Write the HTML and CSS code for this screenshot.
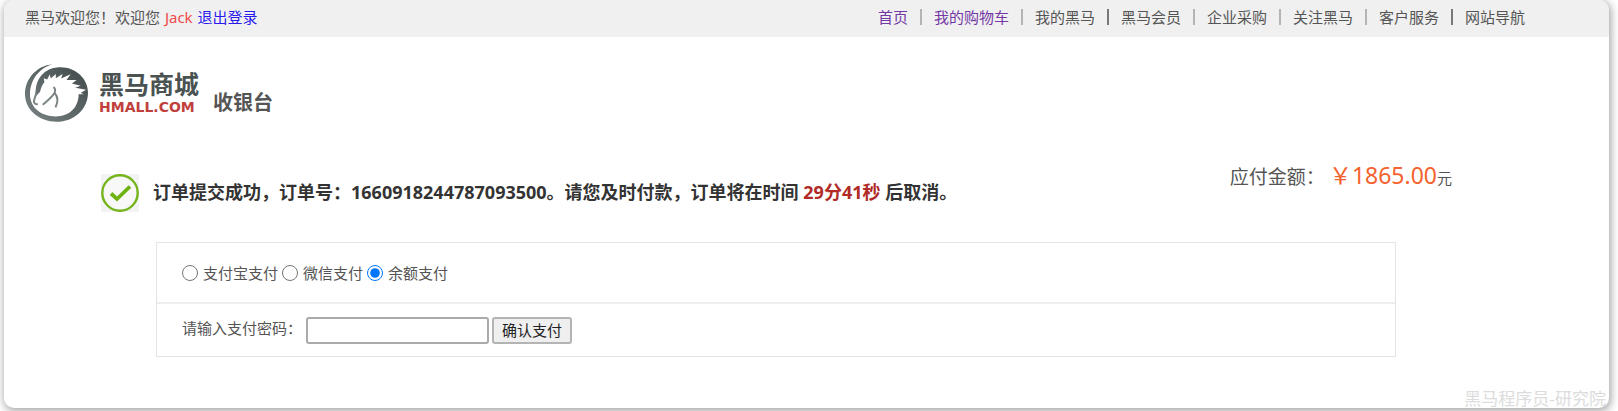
FILE: index.html
```html
<!DOCTYPE html>
<html lang="zh-CN">
<head>
<meta charset="utf-8">
<title>收银台</title>
<link rel="stylesheet" href="styles.css">
</head>
<body>
<div class="card">
  <header class="topbar">
    <p class="welcome">黑马欢迎您！欢迎您 <span class="user">Jack</span> <a class="logout" href="#">退出登录</a></p>
    <nav class="nav">
      <a class="visited" href="#">首页</a>
      <a class="visited" href="#">我的购物车</a>
      <a href="#">我的黑马</a>
      <a class="strong" href="#">黑马会员</a>
      <a href="#">企业采购</a>
      <a href="#">关注黑马</a>
      <a href="#">客户服务</a>
      <a class="strong" href="#">网站导航</a>
    </nav>
  </header>

  <div class="brand">
    <svg class="logo" viewBox="0 0 188 172" aria-hidden="true">
      <defs>
        <linearGradient id="ring" x1="0" y1="1" x2="1" y2="0">
          <stop offset="0" stop-color="#7b8484"/>
          <stop offset="1" stop-color="#3e4848"/>
        </linearGradient>
      </defs>
      <path fill="url(#ring)" d="M82 0C36 4 0 42 0 90c0 46 42 82 94 82s94-38 94-87c0-43-38-76-82-76C66 9 36 34 32 76L29 100L45 82Q50 62 58 54L56 42L66 46L74 31L77 43L92 29L92 42L112 29L108 43L136 30L124 47L154 47L140 58L166 64L150 70L182 76L166 86L176 90L160 90C160 130 132 156 92 156C48 156 15 130 15 90C15 46 44 10 82 0Z"/>
      <path class="logo-line" d="M34 84C32 98 25 104 27 114Q30 121 38 119M85 68Q93 75 88 86Q80 99 53 121M88 85Q104 104 91 129"/>
    </svg>
    <div class="brand-name">
      <span class="brand-cn">黑马商城</span>
      <span class="brand-en">HMALL.COM</span>
    </div>
    <h1 class="page-title">收银台</h1>
  </div>

  <main>
    <section class="order">
      <svg class="check" viewBox="0 0 38 38" aria-hidden="true">
        <rect width="38" height="38" fill="#f3f3f3"/>
        <circle cx="19" cy="19" r="17.7" fill="#f8f8f8" stroke="#74b51b" stroke-width="2.4"/>
        <path d="M10 19.500L16 25L29 12.500" fill="none" stroke="#6eb313" stroke-width="3.800"/>
      </svg>
      <p class="order-text">订单提交成功，订单号：1660918244787093500。请您及时付款，订单将在时间 <span class="countdown">29分41秒</span> 后取消。</p>
      <p class="amount"><span class="amount-label">应付金额：</span><span class="price">￥1865.00</span>元</p>
    </section>

    <form class="pay">
      <div class="methods">
        <label><input type="radio" name="method">支付宝支付</label>
        <label><input type="radio" name="method">微信支付</label>
        <label><input type="radio" name="method" checked>余额支付</label>
      </div>
      <div class="password">
        <label for="pwd">请输入支付密码：</label>
        <input id="pwd" type="password">
        <button type="button">确认支付</button>
      </div>
    </form>
  </main>
  <span class="watermark">黑马程序员-研究院</span>
</div>
</body>
</html>
```

FILE: styles.css
```css
* {
  box-sizing: border-box;
}

body {
  margin: 0;
  padding: 0 9px 4px 4px;
  background: #fff;
  color: #555;
  font: 15px/20px "Noto Sans", "Noto Sans CJK SC", sans-serif;
}

p,
h1 {
  margin: 0;
}

a {
  color: inherit;
  text-decoration: none;
}

.card {
  position: relative;
  padding-bottom: 51px;
  border-radius: 10px;
  background: #fff;
  box-shadow: 1px 2px 8px 1px rgba(0, 0, 0, 0.36);
}

.topbar {
  display: flex;
  justify-content: space-between;
  align-items: center;
  height: 37px;
  padding: 0 84px 4px 21px;
  border-radius: 10px 10px 0 0;
  background: #f0f0f0;
}

.user {
  margin: 0 1px;
  color: #f04a4a;
}

.logout {
  color: #2a1aee;
}

.nav {
  display: flex;
}

.nav a + a {
  display: flex;
  align-items: center;
}

.nav a + a::before {
  content: "";
  width: 2px;
  height: 16px;
  margin: 0 12px;
  background: #b4b4b4;
}

.nav .strong::before {
  background: #777;
}

.nav .visited {
  color: #7439a6;
}

.brand {
  display: flex;
  align-items: center;
  padding: 27px 21px 0;
}

.logo {
  width: 63px;
  height: 58px;
}

.logo-line {
  fill: none;
  stroke: #7b8484;
  stroke-width: 6;
}

.brand-name {
  display: flex;
  flex-direction: column;
  margin-left: 11px;
}

.brand-cn {
  color: #4a5252;
  font-size: 25px;
  font-weight: 700;
  line-height: 28px;
}

.brand-en {
  color: #c0403c;
  font: 700 14px/18px "DejaVu Sans", sans-serif;
}

.page-title {
  align-self: flex-end;
  margin: 0 0 7px 14px;
  font-size: 20px;
  line-height: 24px;
}

.order {
  display: flex;
  padding: 38px 157px 0 97px;
}

.check {
  width: 38px;
  height: 38px;
  margin-top: 14px;
}

.order-text {
  margin: 20px 0 0 14px;
  color: #333;
  font-size: 18px;
  font-weight: 700;
  line-height: 24px;
}

.countdown {
  color: #b02a26;
}

.amount {
  margin-left: auto;
  line-height: 30px;
  white-space: nowrap;
}

.amount-label {
  font-size: 19px;
}

.price {
  margin-left: 4px;
  color: #f5622d;
  font-size: 23px;
}

.pay {
  margin: 30px 213px 0 152px;
  border: 1px solid #e4e4e4;
}

.methods {
  display: flex;
  gap: 4px;
  align-items: center;
  height: 61px;
  padding-left: 25px;
  border-bottom: 2px solid #eee;
}

.methods label {
  display: flex;
  gap: 5px;
  align-items: center;
}

.methods input {
  width: 16px;
  height: 16px;
  margin: 0;
}

.password {
  display: flex;
  align-items: center;
  height: 52px;
  padding-left: 25px;
}

.password label {
  padding-bottom: 4px;
}

.password input {
  width: 183px;
  height: 27px;
  margin-left: 4px;
  border: 2px solid #aaa;
  border-radius: 3px;
}

.password button {
  height: 27px;
  margin-left: 3px;
  padding: 0 8px;
  border: 2px solid #b4b4b4;
  border-radius: 3px;
  background: #efefef;
  color: #222;
  font: inherit;
}

.watermark {
  position: absolute;
  right: 3px;
  bottom: -1px;
  color: #dcdcdc;
  font: 17px/18px "Liberation Serif", "Noto Sans CJK SC", serif;
}
```
